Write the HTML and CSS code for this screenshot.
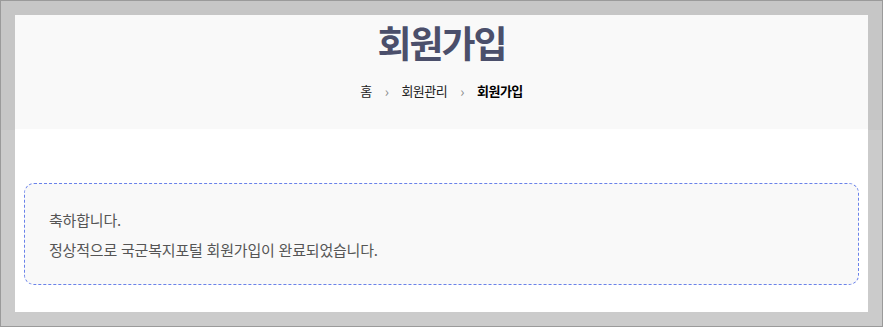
FILE: index.html
```html
<!DOCTYPE html>
<html lang="ko">
<head>
    <meta charset="UTF-8">
    <meta name="viewport" content="width=device-width, initial-scale=1.0">
    <title>회원가입</title>
    <link rel="stylesheet" href="styles.css">
</head>
<body>
    <div class="frame">
        <div class="page">
            <div class="page-head">
                <h2 class="page-title">회원가입</h2>
                <ul class="breadcrumb">
                    <li>홈</li>
                    <li class="sep">&#8250;</li>
                    <li>회원관리</li>
                    <li class="sep">&#8250;</li>
                    <li class="current">회원가입</li>
                </ul>
            </div>
            <div class="content">
                <div class="notice">
                    <p>축하합니다.</p>
                    <p>정상적으로 국군복지포털 회원가입이 완료되었습니다.</p>
                </div>
            </div>
        </div>
    </div>
</body>
</html>
```

FILE: styles.css
```css
html, body {
    margin: 0;
    padding: 0;
}
body {
    font-family: "Noto Sans CJK KR", "Noto Sans", sans-serif;
    background-color: #cbcbcb;
}
.frame {
    height: 327px;
    box-sizing: border-box;
    border: 1px solid #9a9a9a;
    padding: 14px;
    background: linear-gradient(#c6c6c6 0, #c6c6c6 129px, #cbcbcb 129px);
}
.page {
    height: 297px;
    background: #fff;
}
.page-head {
    height: 114px;
    background-color: #f9f9f9;
    text-align: center;
    box-sizing: border-box;
    padding-top: 2px;
}
.page-title {
    margin: 0;
    font-size: 37px;
    font-weight: 700;
    line-height: 50px;
    letter-spacing: -2px;
    color: #4b4f6b;
}
.breadcrumb {
    list-style: none;
    margin: 14px 0 0;
    padding: 0;
    display: flex;
    justify-content: center;
    align-items: center;
    gap: 13px;
    font-size: 13px;
    line-height: 20px;
    letter-spacing: -0.5px;
    color: #222;
}
.breadcrumb .sep {
    color: #888;
    font-size: 14px;
}
.breadcrumb .current {
    font-weight: 700;
    color: #000;
}
.content {
    padding: 54px 9px 0;
}
.notice {
    height: 102px;
    box-sizing: border-box;
    border: 1px dashed #6a82ea;
    border-radius: 10px;
    background-color: #f9f9f9;
    padding: 21px 24px;
    font-size: 15px;
    color: #555;
    letter-spacing: -0.2px;
}
.notice p {
    margin: 0;
    line-height: 30px;
}
```
